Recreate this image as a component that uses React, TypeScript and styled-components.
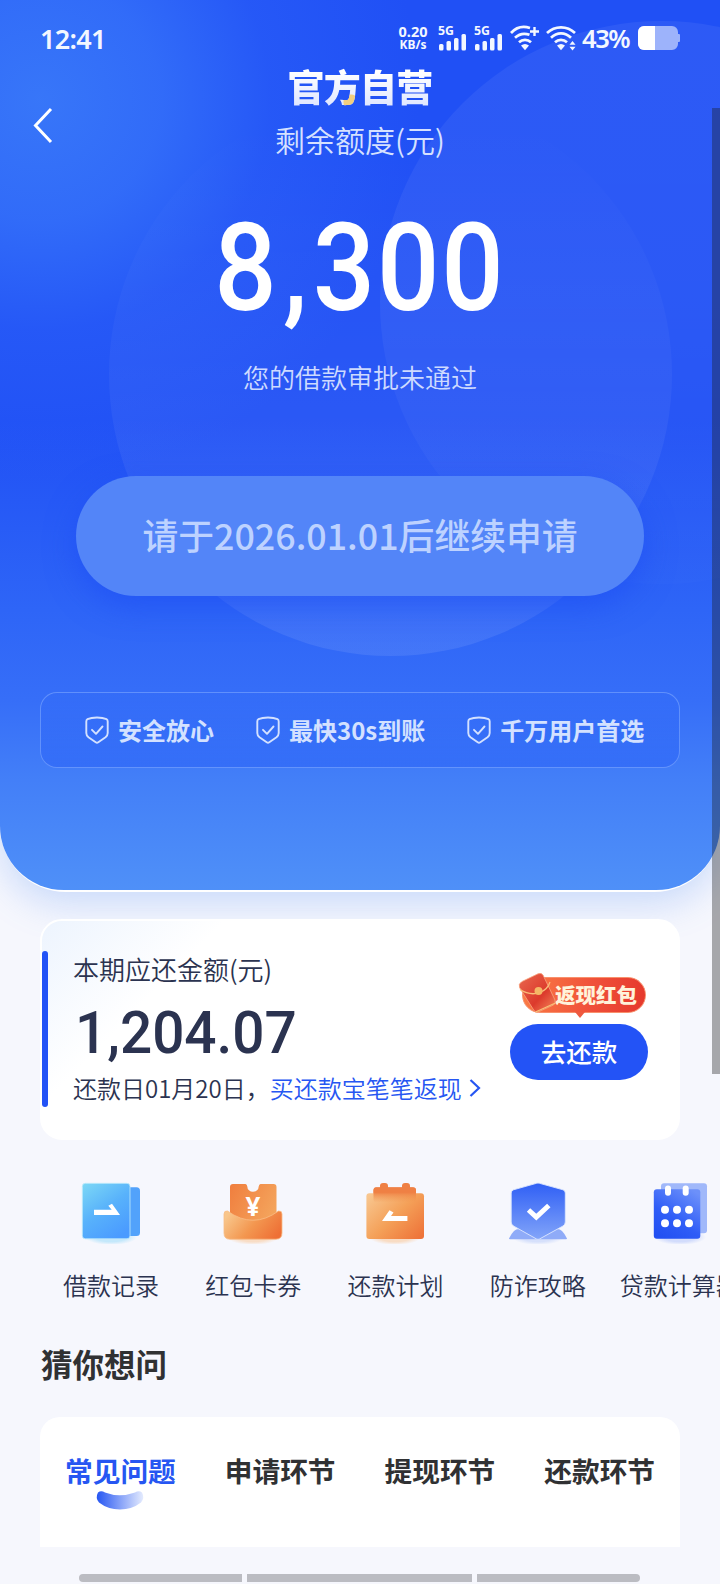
import { styled, createGlobalStyle } from "styled-components";
import type { ReactNode } from "react";

const GlobalStyle = createGlobalStyle`
    * {
        box-sizing: border-box;
    }
    body {
        margin: 0;
        background-color: #f6f7fd;
        font-family: "Noto Sans CJK SC", "Noto Sans", sans-serif;
        overflow: hidden;
    }
`;

const Page = styled.div`
    position: relative;
    width: 720px;
    height: 1584px;
    overflow: hidden;
    background-color: #f6f7fd;
`;

const Hero = styled.section`
    position: relative;
    z-index: 0;
    display: flex;
    flex-direction: column;
    align-items: center;
    height: 890px;
    overflow: hidden;
    border-radius: 0 0 64px 64px;
    background:
        radial-gradient(circle at 40px 100px, rgba(58, 122, 249, 0.9) 0, rgba(56, 118, 250, 0.72) 120px, rgba(46, 100, 249, 0.4) 230px, rgba(32, 80, 245, 0) 380px),
        linear-gradient(180deg, #2050f5 0, #2050f5 420px, #2e65f7 610px, #366ef8 700px, #437ff8 780px, #4f90f8 890px);
`;

const HeroShadow = styled.div`
    border-radius: 0 0 66px 66px;
    box-shadow: 0 2px 0 #fff, 0 14px 36px rgba(80, 140, 245, 0.27);
`;

const Ring = styled.span<{ $x: number; $y: number; $fade: string }>`
    position: absolute;
    z-index: -1;
    left: ${props => props.$x}px;
    top: ${props => props.$y}px;
    width: 563px;
    height: 563px;
    border-radius: 50%;
    background: ${props => props.$fade};
`;

const StatusBar = styled.header`
    display: flex;
    align-items: center;
    width: 100%;
    height: 62px;
    padding: 18px 40px 4px 40px;
    color: #f3f7ff;
    font-family: "Noto Sans", sans-serif;
`;

const Clock = styled.span`
    flex: 1;
    font-size: 27px;
    font-weight: 600;
    letter-spacing: -0.7px;
`;

const Speed = styled.span`
    width: 34px;
    margin-right: 8px;
    font-size: 14.5px;
    font-weight: 700;
    line-height: 14px;
    text-align: center;
    white-space: nowrap;
    small {
        display: block;
        font-size: 12px;
    }
`;

const Percent = styled.span`
    width: 50px;
    margin: 0 6px 0 0;
    font-size: 25.5px;
    font-weight: 600;
    letter-spacing: -1.4px;
    white-space: nowrap;
`;

const Nav = styled.nav`
    display: grid;
    grid-template-columns: 86px 1fr 86px;
    align-items: center;
    width: 100%;
`;

const BackButton = styled.button`
    display: flex;
    padding: 20px 0 0 32px;
    border: none;
    background: none;
`;

const Titles = styled.div`
    display: flex;
    flex-direction: column;
    align-items: center;
`;

const Logo = styled.h1`
    margin: 0;
    font-size: 37px;
    font-weight: 900;
    line-height: 49px;
    letter-spacing: -0.7px;
    color: transparent;
    background:
        radial-gradient(circle at 64px 40px, #f2cf80 0, #f2cf80 7px, transparent 8px),
        linear-gradient(180deg, #ffffff 20%, #dfe6ff 90%);
    background-clip: text;
    -webkit-background-clip: text;
`;

const Subtitle = styled.p`
    margin: 0;
    font-size: 30px;
    font-weight: 350;
    line-height: 57px;
    color: #d6e1ff;
`;

const Amount = styled.div<{ $size: number; $gap: number }>`
    font-family: Roboto, sans-serif;
    font-size: ${props => props.$size}px;
    font-weight: 500;
    line-height: 1.05;
    letter-spacing: ${props => props.$gap}px;
    white-space: nowrap;
`;

const Available = styled(Amount)`
    margin-top: 37px;
    transform: scaleX(0.9);
    color: #fff;
    i {
        margin: 0 4px 0 5px;
        font-style: normal;
    }
`;

const Message = styled.p`
    margin: 24px 0 0;
    font-size: 26px;
    font-weight: 350;
    line-height: 40px;
    color: #cddaff;
`;

const ApplyButton = styled.button`
    width: 568px;
    height: 120px;
    margin-top: 79px;
    padding: 0 0 4px;
    border: none;
    border-radius: 60px;
    background-color: #5385f8;
    box-shadow: 0 10px 30px rgba(28, 76, 244, 0.6);
    color: #bdd2ff;
    font-family: inherit;
    font-size: 35.8px;
    font-weight: 500;
`;

const Features = styled.ul`
    display: flex;
    align-items: center;
    width: 640px;
    height: 76px;
    margin: 96px 0 0;
    padding: 0 0 2px 44px;
    border: 1px solid rgba(134, 174, 255, 0.55);
    border-radius: 17px;
    background: linear-gradient(180deg, rgba(52, 108, 248, 0.6), rgba(50, 107, 247, 0.8));
    list-style: none;
`;

const Feature = styled.li`
    display: flex;
    align-items: center;
    gap: 9px;
    margin-right: 42px;
    font-size: 24px;
    font-weight: 600;
    color: #d3e1ff;
    white-space: nowrap;
    svg {
        position: relative;
        top: 1px;
    }
`;

const Card = styled.section`
    position: relative;
    display: flex;
    justify-content: space-between;
    width: 640px;
    height: 221px;
    margin: 29px auto 0;
    padding: 30px 30px 0 31px;
    border: 2px solid #fff;
    border-radius: 22px;
    background: linear-gradient(135deg, #edf4fe 0, #fff 130px);
    color: #2b3350;
    &::before {
        content: "";
        position: absolute;
        left: 0;
        top: 30px;
        width: 6px;
        height: 156px;
        border-radius: 3px;
        background-color: #2353f6;
    }
`;

const Label = styled.p`
    margin: 0;
    font-size: 26px;
    font-weight: 350;
    line-height: 36px;
`;

const Due = styled(Amount)`
    margin: 14px 0 7px 2px;
    transform: scaleX(0.945);
    transform-origin: left;
`;

const DueDate = styled.p`
    display: flex;
    align-items: center;
    margin: 0;
    font-size: 24px;
    font-weight: 350;
    line-height: 34px;
    white-space: nowrap;
`;

const CashbackLink = styled.a`
    display: flex;
    align-items: center;
    gap: 7px;
    color: #2656f2;
`;

const Actions = styled.div`
    display: flex;
    flex-direction: column;
    align-items: flex-end;
    padding-top: 22px;
`;

const Badge = styled.span`
    position: relative;
    display: flex;
    align-items: center;
    justify-content: flex-end;
    width: 124px;
    height: 36px;
    margin: 4px 2px 11px 0;
    padding: 0 8px 2px 0;
    border: 1px solid #f8906c;
    border-radius: 18px;
    background: linear-gradient(100deg, #fa7d45 0, #f0513a 55%, #e5382c 100%);
    color: #fff3da;
    font-size: 20.5px;
    font-weight: 900;
    white-space: nowrap;
    svg {
        position: absolute;
        left: -5px;
        top: -6px;
    }
    &::after {
        content: "";
        position: absolute;
        left: 52px;
        top: 34px;
        border: 5px solid transparent;
        border-top: 6px solid #ee5a40;
        border-bottom: none;
    }
`;

const RepayButton = styled.button`
    width: 138px;
    height: 56px;
    padding: 0 0 4px;
    border: none;
    border-radius: 28px;
    background-color: #2353f6;
    color: #fff;
    font-family: inherit;
    font-size: 25.5px;
    font-weight: 500;
`;

const Menu = styled.nav`
    display: flex;
    padding: 40px 0 0 40px;
`;

const MenuItem = styled.a`
    display: flex;
    flex: 0 0 142.2px;
    flex-direction: column;
    align-items: center;
    gap: 25px;
    font-size: 24px;
    font-weight: 350;
    line-height: 32px;
    color: #2b3350;
    white-space: nowrap;
`;

const Heading = styled.h2`
    margin: 42px 0 34px 41px;
    font-size: 31.5px;
    font-weight: 700;
    line-height: 40px;
    color: #303133;
`;

const Tabs = styled.div`
    display: flex;
    gap: 49px;
    width: 640px;
    height: 130px;
    margin: 0 auto;
    padding: 33px 0 0 25px;
    border-radius: 20px 20px 0 0;
    background-color: #fff;
`;

const Tab = styled.span<{ $active?: boolean }>`
    position: relative;
    font-size: 27.7px;
    font-weight: 700;
    line-height: 40px;
    color: ${props => props.$active ? "#2656f2" : "#303133"};
    white-space: nowrap;
    svg {
        position: absolute;
        left: 30px;
        top: 40px;
    }
`;

const Segments = styled.div`
    display: grid;
    grid-template-columns: 163px 225px 163px;
    gap: 5px;
    margin: 27px 0 0 79px;
`;

const Segment = styled.span`
    height: 8px;
    background-color: #bbbcc2;
    &:first-child {
        border-radius: 4px 0 0 4px;
    }
    &:last-child {
        border-radius: 0 4px 4px 0;
    }
`;

const Scrollbar = styled.div`
    position: absolute;
    right: 0;
    top: 108px;
    width: 8px;
    height: 966px;
    background-color: rgba(30, 30, 30, 0.37);
`;

const StatusIcon = styled.svg<{ $gap: number }>`
    margin-right: ${props => props.$gap}px;
    overflow: visible;
`;

function Signal() {
    return (
        <StatusIcon $gap={7} width="29" height="26" viewBox="0 0 29 26" fill="#f3f7ff">
            <text x="0" y="9.5" fontSize="12" fontWeight="700" textLength="16" lengthAdjust="spacingAndGlyphs">5G</text>
            <rect x="1" y="19" width="4.5" height="6.5" rx="1.5" />
            <rect x="8.5" y="16" width="4.5" height="9.5" rx="1.5" />
            <rect x="16" y="13" width="4.5" height="12.5" rx="1.5" />
            <rect x="23.5" y="9" width="4.5" height="16.5" rx="1.5" />
        </StatusIcon>
    );
}

function Wifi({ plus }: { plus?: boolean }) {
    return (
        <StatusIcon $gap={6} width="30" height="26" viewBox="0 0 30 26" fill="none" stroke="#f3f7ff" strokeWidth="2.7">
            <path d={plus ? "M1 8C6.5 2 13 .8 20 3" : "M1 8C9 .4 21 .4 29 8"} />
            <path d={plus ? "M5 12.8C9 9 14.500 8 19.500 9.800" : "M5 12.8C11 7 19 7 25 12.8"} />
            <path d="M9 17.300C12.5 14 17.5 14 21 17.300" />
            <path d="M11 20.500Q15 17.500 19 20.500L15 25.200Z" fill="#f3f7ff" stroke="none" />
            {plus
                ? <path d="M24.500 2v9M20 6.500h9" strokeWidth="2.4" />
                : <path d="M26.500 16l3 3.800h-6zM26.500 25.500l3-3.800h-6z" fill="#f3f7ff" stroke="none" />}
        </StatusIcon>
    );
}

function Battery() {
    return (
        <svg width="42" height="26" viewBox="0 0 42 26">
            <path d="M6 1h28a6 6 0 0 1 6 6v2h1a1 1 0 0 1 1 1v6a1 1 0 0 1-1 1h-1v2a6 6 0 0 1-6 6H6a6 6 0 0 1-6-6V7a6 6 0 0 1 6-6z" fill="#9db3fb" />
            <path d="M17 1H6a6 6 0 0 0-6 6v12a6 6 0 0 0 6 6h11z" fill="#fff" />
        </svg>
    );
}

function Shield() {
    return (
        <svg width="24" height="28" viewBox="0 0 24 28" fill="none" stroke="#d3e1ff" strokeWidth="1.9" strokeLinecap="round" strokeLinejoin="round">
            <path d="M12 1.5C15 1.5 19 2 21.5 3.2Q22.7 3.8 22.7 5.5V17Q22.7 19.5 20.5 21.3L13.3 26.3Q12 27.2 10.7 26.3L3.5 21.3Q1.3 19.5 1.3 17V5.5Q1.3 3.8 2.5 3.2C5 2 9 1.5 12 1.5Z" />
            <path d="M7 13.8l4 4L17.5 10.5" />
        </svg>
    );
}

function Envelope() {
    return (
        <svg width="40" height="42" viewBox="0 0 40 42">
            <defs>
                <linearGradient id="env" x1="0" y1="0" x2="1" y2="1">
                    <stop offset="0" stopColor="#e9694f" />
                    <stop offset="0.6" stopColor="#dc3a2c" />
                    <stop offset="1" stopColor="#f58a5c" />
                </linearGradient>
            </defs>
            <path d="M4 9.5L20 1.8Q23.5 .5 25 3L37 28Q38 31 35.5 33L20 40Q17.5 41 16 38.500L1.500 15.500Q0 12 4 9.500Z" fill="url(#env)" stroke="#f9a47f" strokeWidth="0.8" />
            <path d="M2 17.5Q12 24 22 20.500Q30 17 32 10" fill="none" stroke="#f9bd79" strokeWidth="1.3" />
            <path d="M17.5 40L37.5 31" stroke="#f8c277" strokeWidth="1.3" />
            <circle cx="20.5" cy="19" r="4" fill="#f5b765" />
        </svg>
    );
}

function MenuIcon({ glow, children }: { glow: string; children: ReactNode }) {
    return (
        <svg width="64" height="64" viewBox="0 0 64 64">
            <defs>
                <radialGradient id={`glow${glow}`}>
                    <stop offset="0.6" stopColor={`#${glow}`} />
                    <stop offset="1" stopColor={`#${glow}`} stopOpacity="0" />
                </radialGradient>
            </defs>
            <ellipse cx="32" cy="57" rx="26" ry="8" fill={`url(#glow${glow})`} />
            {children}
        </svg>
    );
}

function RecordIcon() {
    return (
        <MenuIcon glow="c4e8fb">
            <defs>
                <linearGradient id="rec" x1="0.1" y1="0" x2="0.7" y2="1">
                    <stop offset="0" stopColor="#7ad5f6" />
                    <stop offset="0.5" stopColor="#58b2fb" />
                    <stop offset="1" stopColor="#4a9bff" />
                </linearGradient>
            </defs>
            <rect x="44" y="7.3" width="17" height="48.7" rx="3.5" fill="#52a2fb" />
            <rect x="3.3" y="3.3" width="47.7" height="55.5" rx="3" fill="url(#rec)" stroke="#c2ecfb" strokeWidth="0.8" />
            <path d="M15 29.7H32.7L29.3 25.7L33 23.7L41 35H15Z" fill="#fff" />
        </MenuIcon>
    );
}

function CouponIcon() {
    return (
        <MenuIcon glow="f8ddc6">
            <defs>
                <linearGradient id="tic" x1="0" y1="0" x2="1" y2="0.5">
                    <stop offset="0" stopColor="#f07e3e" />
                    <stop offset="1" stopColor="#f4a45c" />
                </linearGradient>
                <linearGradient id="poc" x1="0" y1="0.3" x2="1" y2="0.7">
                    <stop offset="0" stopColor="#f8c68b" />
                    <stop offset="0.5" stopColor="#f39750" />
                    <stop offset="1" stopColor="#ee6f35" />
                </linearGradient>
            </defs>
            <path d="M12 4H24.5Q26 4 26.3 6.5A5.7 5.3 0 0 0 37.7 6.5Q38 4 39.5 4H52.5Q55.5 4 55.5 7V50H9V7Q9 4 12 4Z" fill="url(#tic)" />
            <path d="M3 34Q3 30.5 6.5 31Q32 49.5 57.5 31Q61 30.5 61 34V53Q61 59.2 55 59.2H9Q3 59.2 3 53Z" fill="url(#poc)" stroke="#f9bd85" strokeWidth="0.8" />
            <text x="32" y="35.5" textAnchor="middle" fontFamily="Noto Sans" fontSize="26" fontWeight="700" fill="#fff">¥</text>
        </MenuIcon>
    );
}

function PlanIcon() {
    return (
        <MenuIcon glow="f8dcc4">
            <defs>
                <linearGradient id="pla" x1="0" y1="0.1" x2="1" y2="0.9">
                    <stop offset="0" stopColor="#f8c68f" />
                    <stop offset="0.5" stopColor="#f4a058" />
                    <stop offset="1" stopColor="#ee7339" />
                </linearGradient>
                <linearGradient id="plb" x1="0" y1="0" x2="0" y2="1">
                    <stop offset="0.3" stopColor="#ef8044" />
                    <stop offset="1" stopColor="#f19651" stopOpacity="0" />
                </linearGradient>
            </defs>
            <path d="M13 7.3H17V6Q17 3 20 3H22Q25 3 25 6V7.3H39V6Q39 3 42 3H44Q47 3 47 6V7.3H50Q53 7.3 53 10.3V18H10.5V10.3Q10.5 7.3 13 7.3Z" fill="#ef8044" />
            <rect x="3.4" y="13.3" width="57.6" height="45.7" rx="3" fill="url(#pla)" />
            <rect x="10.5" y="7.5" width="42.5" height="15" rx="3" fill="url(#plb)" />
            <path d="M19 41L26.5 30.3L30.5 32.6L28 36H44.4V41Z" fill="#fff" />
        </MenuIcon>
    );
}

function GuardIcon() {
    return (
        <MenuIcon glow="d6e0fb">
            <defs>
                <linearGradient id="gua" x1="0" y1="0" x2="0" y2="1">
                    <stop offset="0" stopColor="#2f5ff5" />
                    <stop offset="1" stopColor="#83a5f9" />
                </linearGradient>
            </defs>
            <path d="M3 58.5Q5 54 8 51Q10 49 13 49H51Q54 49 56 51Q59 54 61 58.5Q61 59.3 60 59.3H4Q3 59.3 3 58.5Z" fill="#8fabf8" />
            <path d="M30.5 3.3Q32 2.7 33.5 3.3L57 9.8Q59.3 10.5 59.3 13V42Q59.3 44.5 57 46L33.5 59Q32 59.8 30.5 59L7.5 46Q5.2 44.5 5.2 42V13Q5.2 10.5 7.500 9.800Z" fill="url(#gua)" stroke="#dce6fe" strokeWidth="0.9" />
            <path d="M22.5 30L30.3 37L42.8 25.5" fill="none" stroke="#fff" strokeWidth="5" />
        </MenuIcon>
    );
}

function CalculatorIcon() {
    return (
        <MenuIcon glow="d2dcfc">
            <defs>
                <linearGradient id="cal" x1="0.8" y1="0" x2="0.2" y2="1">
                    <stop offset="0" stopColor="#6c90fa" />
                    <stop offset="0.6" stopColor="#2f5df7" />
                    <stop offset="1" stopColor="#2250f2" />
                </linearGradient>
            </defs>
            <rect x="13" y="3.3" width="46" height="50" rx="3" fill="#a0b8fa" />
            <rect x="5.8" y="9.3" width="46.5" height="49.5" rx="3" fill="url(#cal)" />
            {[20, 37.7].map(x => <rect key={x} x={x - 3} y="5.5" width="6" height="10.3" rx="3" fill="#fff" />)}
            {[17, 29, 41].map(x => [29.7, 43.3].map(y => <circle key={`${x}-${y}`} cx={x} cy={y} r="4" fill="#fff" />))}
        </MenuIcon>
    );
}

const features = ["安全放心", "最快30s到账", "千万用户首选"];

const menu = [
    { label: "借款记录", icon: <RecordIcon /> },
    { label: "红包卡券", icon: <CouponIcon /> },
    { label: "还款计划", icon: <PlanIcon /> },
    { label: "防诈攻略", icon: <GuardIcon /> },
    { label: "贷款计算器", icon: <CalculatorIcon /> },
];

const tabs = ["常见问题", "申请环节", "提现环节", "还款环节"];

function App() {
    return (
        <Page>
            <GlobalStyle />
            <HeroShadow>
                <Hero>
                    <Ring $x={109} $y={93} $fade="linear-gradient(180deg, rgba(255, 255, 255, 0) 5%, rgba(255, 255, 255, 0.035) 45%, rgba(255, 255, 255, 0.085) 100%)" />
                    <Ring $x={380} $y={21} $fade="linear-gradient(180deg, rgba(255, 255, 255, 0.06) 0%, rgba(255, 255, 255, 0.05) 50%, rgba(255, 255, 255, 0.01) 98%)" />
                    <StatusBar>
                        <Clock>12:41</Clock>
                        <Speed>0.20<small>KB/s</small></Speed>
                        <Signal />
                        <Signal />
                        <Wifi plus />
                        <Wifi />
                        <Percent>43%</Percent>
                        <Battery />
                    </StatusBar>
                    <Nav>
                        <BackButton>
                            <svg width="22" height="38" viewBox="0 0 22 38" fill="none" stroke="#fff" strokeWidth="3">
                                <path d="M19 3L3.5 19.5L19 36" />
                            </svg>
                        </BackButton>
                        <Titles>
                            <Logo>官方自营</Logo>
                            <Subtitle>剩余额度(元)</Subtitle>
                        </Titles>
                    </Nav>
                    <Available $size={122} $gap={2}>8<i>,</i>300</Available>
                    <Message>您的借款审批未通过</Message>
                    <ApplyButton>请于2026.01.01后继续申请</ApplyButton>
                    <Features>
                        {features.map(feature => (
                            <Feature key={feature}>
                                <Shield />
                                {feature}
                            </Feature>
                        ))}
                    </Features>
                </Hero>
            </HeroShadow>
            <Card>
                <div>
                    <Label>本期应还金额(元)</Label>
                    <Due $size={60} $gap={0}>1,204.07</Due>
                    <DueDate>
                        还款日01月20日，
                        <CashbackLink>
                            买还款宝笔笔返现
                            <svg width="12" height="20" viewBox="0 0 12 20" fill="none" stroke="#2656f2" strokeWidth="2.2">
                                <path d="M1.5 2L10 10L1.5 18" />
                            </svg>
                        </CashbackLink>
                    </DueDate>
                </div>
                <Actions>
                    <Badge>
                        <Envelope />
                        返现红包
                    </Badge>
                    <RepayButton>去还款</RepayButton>
                </Actions>
            </Card>
            <Menu>
                {menu.map(item => (
                    <MenuItem key={item.label}>
                        {item.icon}
                        {item.label}
                    </MenuItem>
                ))}
            </Menu>
            <Heading>猜你想问</Heading>
            <Tabs>
                {tabs.map((tab, index) => (
                    <Tab key={tab} $active={index === 0}>
                        {tab}
                        {index === 0 && (
                            <svg width="50" height="22" viewBox="0 0 50 22">
                                <defs>
                                    <linearGradient id="smile">
                                        <stop offset="0" stopColor="#2656f2" />
                                        <stop offset="1" stopColor="#e4ebfe" />
                                    </linearGradient>
                                </defs>
                                <path d="M3 2.500Q6 0 10 2.500Q24.5 8 40 2.500Q44 0 47 2.500Q50 8 46 12.500Q37 19.500 25 19.500Q13 19.500 4 12.500Q0 8 3 2.500Z" fill="url(#smile)" />
                            </svg>
                        )}
                    </Tab>
                ))}
            </Tabs>
            <Segments>
                <Segment />
                <Segment />
                <Segment />
            </Segments>
            <Scrollbar />
        </Page>
    );
}
export default App;
